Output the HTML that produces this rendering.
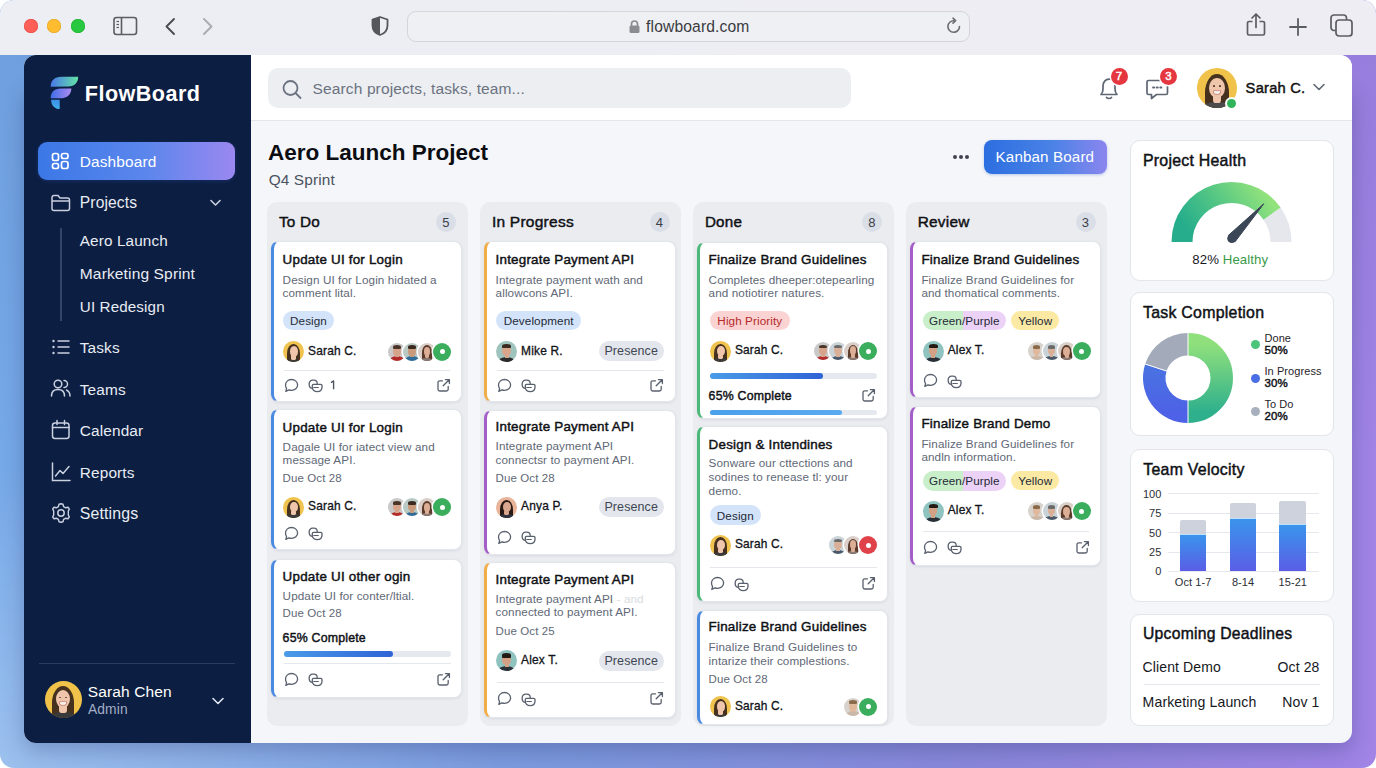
<!DOCTYPE html>
<html><head><meta charset="utf-8"><title>FlowBoard</title>
<style>
*{box-sizing:border-box;margin:0;padding:0}
html,body{width:1376px;height:768px;overflow:hidden;background:#fff;font-family:"Liberation Sans", sans-serif}
.a{position:absolute}
.t{position:absolute;line-height:1;white-space:nowrap}
.av{border-radius:50%;overflow:hidden}
.av i{filter:blur(0.3px)}
.av i{position:absolute;display:block}
</style></head><body>
<div class="a" style="left:0.0px;top:0.0px;width:1376.0px;height:768.0px;border-radius:14px;overflow:hidden;background:radial-gradient(ellipse 500px 300px at 0% 100%,rgba(255,255,255,0.28),rgba(255,255,255,0) 100%),linear-gradient(180deg,rgba(10,20,80,0.07) 0%,rgba(255,255,255,0.0) 60%),linear-gradient(90deg,#76a9e8 0%,#7c9ade 40%,#8a88da 70%,#a184e6 100%)"></div><div class="a" style="left:0.0px;top:0.0px;width:1376.0px;height:55.0px;border-radius:14px 14px 0 0;background:linear-gradient(90deg,#eceef3,#eeedf3)"></div><div class="a" style="left:23.5px;top:19.0px;width:14.0px;height:14.0px;border-radius:50%;background:#fe5f57;box-shadow:inset 0 0 0 0.5px #e2463f"></div><div class="a" style="left:47.0px;top:19.0px;width:14.0px;height:14.0px;border-radius:50%;background:#febc2e;box-shadow:inset 0 0 0 0.5px #dea123"></div><div class="a" style="left:70.5px;top:19.0px;width:14.0px;height:14.0px;border-radius:50%;background:#28c840;box-shadow:inset 0 0 0 0.5px #1aab29"></div><svg class="a" style="left:113px;top:16px;" width="25" height="20" viewBox="0 0 25 20" fill="none"><rect x="1" y="1.5" width="22.5" height="17" rx="2.5" stroke="#5b5d63" stroke-width="1.6"/><line x1="8.5" y1="2" x2="8.5" y2="18" stroke="#5b5d63" stroke-width="1.6"/><line x1="3.5" y1="5.5" x2="6" y2="5.5" stroke="#5b5d63" stroke-width="1.2"/><line x1="3.5" y1="8.5" x2="6" y2="8.5" stroke="#5b5d63" stroke-width="1.2"/><line x1="3.5" y1="11.5" x2="6" y2="11.5" stroke="#5b5d63" stroke-width="1.2"/></svg><svg class="a" style="left:163px;top:17px;" width="14" height="19" viewBox="0 0 14 19" fill="none"><path d="M11 2 L3.5 9.5 L11 17" stroke="#4a4c52" stroke-width="1.9" stroke-linecap="round" stroke-linejoin="round"/></svg><svg class="a" style="left:201px;top:17px;" width="14" height="19" viewBox="0 0 14 19" fill="none"><path d="M3 2 L10.5 9.5 L3 17" stroke="#a9abb1" stroke-width="1.9" stroke-linecap="round" stroke-linejoin="round"/></svg><svg class="a" style="left:370px;top:15px;" width="20" height="22" viewBox="0 0 20 22" fill="none"><path d="M10 2 L17.5 4.5 V10.5 C17.5 15 14.5 18.5 10 20 C5.5 18.5 2.5 15 2.5 10.5 V4.5 Z" stroke="#55575d" stroke-width="1.8" stroke-linejoin="round"/><path d="M10 2 L2.5 4.5 V10.5 C2.5 15 5.5 18.5 10 20 Z" fill="#55575d"/></svg><div class="a" style="left:406.5px;top:10.5px;width:563.0px;height:31.0px;border-radius:9px;border:1px solid #d3d5db;background:#eef0f4"></div><svg class="a" style="left:628px;top:19px;" width="13" height="15" viewBox="0 0 13 15" fill="none"><path d="M3.5 7 V5 a3 3 0 0 1 6 0 V7" stroke="#8a8c92" stroke-width="1.7"/><rect x="1.5" y="6.5" width="10" height="7.5" rx="1.5" fill="#8a8c92"/></svg><div class="t" style="left:646.1px;top:18.8px;font-size:15.65px;color:#3a3b40;letter-spacing:0.008em;">flowboard.com</div><svg class="a" style="left:945px;top:17px;" width="18" height="18" viewBox="0 0 18 18" fill="none"><path d="M14.5 9.5 A5.8 5.8 0 1 1 9 3.7" stroke="#6a6c72" stroke-width="1.6" stroke-linecap="round"/><path d="M8 1.2 L10.6 3.7 L8 6.2" stroke="#6a6c72" stroke-width="1.6" stroke-linecap="round" stroke-linejoin="round"/></svg><svg class="a" style="left:1245px;top:12px;" width="22" height="25" viewBox="0 0 22 25" fill="none"><path d="M7.5 9.5 H4 a1.5 1.5 0 0 0 -1.5 1.5 V21.5 a1.5 1.5 0 0 0 1.5 1.5 H18 a1.5 1.5 0 0 0 1.5 -1.5 V11 a1.5 1.5 0 0 0 -1.5 -1.5 H14.5" stroke="#5b5d63" stroke-width="1.7"/><path d="M11 15.5 V2.5 M7 6 L11 2 L15 6" stroke="#5b5d63" stroke-width="1.7" stroke-linecap="round" stroke-linejoin="round"/></svg><svg class="a" style="left:1288px;top:17px;" width="20" height="20" viewBox="0 0 20 20" fill="none"><path d="M10 2 V18 M2 10 H18" stroke="#5b5d63" stroke-width="1.8" stroke-linecap="round"/></svg><svg class="a" style="left:1329px;top:13px;" width="26" height="25" viewBox="0 0 26 25" fill="none"><rect x="2" y="2" width="15.5" height="15.5" rx="3" stroke="#5b5d63" stroke-width="1.7"/><rect x="7" y="7" width="16" height="16" rx="3" fill="#eeedf3" stroke="#5b5d63" stroke-width="1.7"/></svg><div class="a" style="left:24.0px;top:85.0px;width:1328.0px;height:658.0px;border-radius:12px;box-shadow:0 8px 22px rgba(40,50,110,0.30)"></div><div class="a" style="left:24.0px;top:55.0px;width:1328.0px;height:688.0px;border-radius:12px;background:#f5f6f9"></div><div class="a" style="left:24.0px;top:55.0px;width:227.0px;height:688.0px;border-radius:12px 0 0 12px;background:#0c1e41"></div><div class="a" style="left:251.0px;top:55.0px;width:1101.0px;height:66.0px;border-radius:0 12px 0 0;background:#fff;border-bottom:1px solid #e3e5ea"></div><svg class="a" style="left:49px;top:75px;" width="31" height="36" viewBox="0 0 31 36" fill="none"><defs>
<linearGradient id="lg1" x1="0" y1="0" x2="1" y2="0"><stop offset="0" stop-color="#4a78ea"/><stop offset="1" stop-color="#62e3a4"/></linearGradient>
<linearGradient id="lg2" x1="0" y1="0" x2="1" y2="0"><stop offset="0" stop-color="#3f6ee6"/><stop offset="1" stop-color="#ae8cf2"/></linearGradient>
<linearGradient id="lg3" x1="0" y1="0" x2="0" y2="1"><stop offset="0" stop-color="#3c8ee8"/><stop offset="1" stop-color="#3fb0ec"/></linearGradient></defs>
<path d="M1.7 11.8 C1.7 5.5 5.5 1.8 12.5 1.8 H29.2 C29.2 7.5 25.5 11.6 19.5 11.6 L1.7 11.8 Z" fill="url(#lg1)"/>
<path d="M1.7 23.3 C1.7 17.5 5.2 13.6 11.5 13.6 H22.4 C22.2 19 18.8 23.2 12.5 23.2 L1.7 23.3 Z" fill="url(#lg2)"/>
<path d="M2.1 24.7 H10.7 V34 C5.6 34 2.1 30.3 2.1 24.7 Z" fill="url(#lg3)"/></svg><div class="t" style="left:84.8px;top:83.0px;font-size:21.6px;color:#ffffff;font-weight:700;letter-spacing:0.45px">FlowBoard</div><div class="a" style="left:38.3px;top:142.4px;width:197.0px;height:37.2px;border-radius:9px;background:linear-gradient(90deg,#3b78e6 0%,#5b86ec 55%,#9a88f0 100%);box-shadow:0 1px 4px rgba(60,100,230,0.25)"></div><svg class="a" style="left:51px;top:152px;" width="20" height="19" viewBox="0 0 20 19" fill="none"><rect x="1.5" y="1.5" width="6" height="7" rx="2" stroke="#fff" stroke-width="1.7"/><rect x="10.5" y="1.5" width="6.5" height="5" rx="2" stroke="#fff" stroke-width="1.7"/><rect x="1.5" y="11.5" width="6" height="5" rx="2" stroke="#fff" stroke-width="1.7"/><rect x="10.5" y="9.5" width="6.5" height="7" rx="2" stroke="#fff" stroke-width="1.7"/></svg><div class="t" style="left:79.8px;top:153.9px;font-size:15.45px;color:#ffffff;letter-spacing:0.008em;">Dashboard</div><svg class="a" style="left:50px;top:193px;" width="22" height="20" viewBox="0 0 22 20" fill="none"><path d="M2 4.5 a2 2 0 0 1 2 -2 H8 L10 5 H17.5 a2 2 0 0 1 2 2 V15.5 a2 2 0 0 1 -2 2 H4 a2 2 0 0 1 -2 -2 Z M2 8 H19.5" stroke="#c9d0e0" stroke-width="1.5" stroke-linejoin="round"/></svg><div class="t" style="left:79.8px;top:195.4px;font-size:15.6px;color:#e8ecf4;letter-spacing:0.008em;">Projects</div><svg class="a" style="left:208px;top:197px;" width="15" height="12" viewBox="0 0 15 12" fill="none"><path d="M3 3.5 L7.5 8 L12 3.5" stroke="#c9d0e0" stroke-width="1.6" stroke-linecap="round" stroke-linejoin="round"/></svg><div class="a" style="left:60.0px;top:228.0px;width:1.5px;height:92.5px;background:#34446a"></div><div class="t" style="left:79.8px;top:233.0px;font-size:15.3px;color:#e8ecf4;letter-spacing:0.008em;">Aero Launch</div><div class="t" style="left:79.8px;top:266.2px;font-size:15.55px;color:#e8ecf4;letter-spacing:0.008em;">Marketing Sprint</div><div class="t" style="left:79.8px;top:299.3px;font-size:15.2px;color:#e8ecf4;letter-spacing:0.008em;">UI Redesign</div><svg class="a" style="left:50px;top:337px;" width="22" height="20" viewBox="0 0 22 20" fill="none"><circle cx="3.5" cy="4" r="1.2" fill="#c9d0e0"/><circle cx="3.5" cy="10" r="1.2" fill="#c9d0e0"/><circle cx="3.5" cy="16" r="1.2" fill="#c9d0e0"/><path d="M8 4 H19 M8 10 H19 M8 16 H19" stroke="#c9d0e0" stroke-width="1.5" stroke-linecap="round"/></svg><div class="t" style="left:79.8px;top:340.0px;font-size:15.4px;color:#e8ecf4;letter-spacing:0.008em;">Tasks</div><svg class="a" style="left:50px;top:378px;" width="22" height="20" viewBox="0 0 22 20" fill="none"><circle cx="8" cy="6" r="3.8" stroke="#c9d0e0" stroke-width="1.5"/><path d="M1.5 18 C1.5 13.5 4.5 11.5 8 11.5 C11.5 11.5 14.5 13.5 14.5 18" stroke="#c9d0e0" stroke-width="1.5" stroke-linecap="round"/><path d="M14 2.5 a3.5 3.5 0 0 1 0 7 M16.5 12 C18.5 13 20 15 20 18" stroke="#c9d0e0" stroke-width="1.5" stroke-linecap="round"/></svg><div class="t" style="left:79.8px;top:381.5px;font-size:15.4px;color:#e8ecf4;letter-spacing:0.008em;">Teams</div><svg class="a" style="left:50px;top:419px;" width="22" height="22" viewBox="0 0 22 22" fill="none"><rect x="2.5" y="4" width="16.5" height="15.5" rx="2.5" stroke="#c9d0e0" stroke-width="1.5"/><path d="M2.5 8.5 H19 M7 1.5 V5.5 M14.5 1.5 V5.5" stroke="#c9d0e0" stroke-width="1.5" stroke-linecap="round"/></svg><div class="t" style="left:79.8px;top:423.0px;font-size:15.4px;color:#e8ecf4;letter-spacing:0.008em;">Calendar</div><svg class="a" style="left:50px;top:461px;" width="22" height="22" viewBox="0 0 22 22" fill="none"><path d="M2.5 2 V19.5 H20" stroke="#c9d0e0" stroke-width="1.5" stroke-linecap="round"/><path d="M5.5 15 L10 9.5 L13 12.5 L19 5.5" stroke="#c9d0e0" stroke-width="1.5" stroke-linecap="round" stroke-linejoin="round"/></svg><div class="t" style="left:79.8px;top:464.6px;font-size:15.4px;color:#e8ecf4;letter-spacing:0.008em;">Reports</div><svg class="a" style="left:50px;top:502px;" width="22" height="22" viewBox="0 0 22 22" fill="none"><path d="M11 1.8 L13 2.3 L13.6 4.6 L15.7 5.8 L18 5.2 L19.3 6.9 L18.3 9.1 L18.3 12.9 L19.3 15.1 L18 16.8 L15.7 16.2 L13.6 17.4 L13 19.7 L11 20.2 L9 19.7 L8.4 17.4 L6.3 16.2 L4 16.8 L2.7 15.1 L3.7 12.9 L3.7 9.1 L2.7 6.9 L4 5.2 L6.3 5.8 L8.4 4.6 L9 2.3 Z" stroke="#c9d0e0" stroke-width="1.4" stroke-linejoin="round"/><circle cx="11" cy="11" r="3.2" stroke="#c9d0e0" stroke-width="1.5"/></svg><div class="t" style="left:79.8px;top:505.5px;font-size:15.9px;color:#e8ecf4;letter-spacing:0.008em;">Settings</div><div class="a" style="left:39.0px;top:663.0px;width:196.0px;height:1.0px;background:#2c3b5e"></div><div class="a av" style="left:44.5px;top:681.0px;width:37.0px;height:37.0px;background:#f0c24a;"><i style="left:7.4px;top:5.2px;width:22.2px;height:34.0px;background:#46311f;border-radius:50% 50% 22% 22%"></i><i style="left:3.0px;top:31.1px;width:31.1px;height:14.8px;background:#3a3a3a;border-radius:50% 50% 0 0"></i><i style="left:14.4px;top:22.9px;width:8.1px;height:9.6px;background:#efc6ab;border-radius:30%"></i><i style="left:11.5px;top:8.9px;width:14.1px;height:18.5px;background:#efc6ab;border-radius:50%"></i><i style="left:14.4px;top:15.9px;width:2.6px;height:1.5px;background:#5a3a2c;border-radius:50%"></i><i style="left:20.0px;top:15.9px;width:2.6px;height:1.5px;background:#5a3a2c;border-radius:50%"></i><i style="left:15.5px;top:21.1px;width:5.9px;height:2.6px;background:#f4eeea;border-radius:0 0 50% 50%;box-shadow:0 0 0 0.6px #b86a5c"></i></div><div class="t" style="left:87.8px;top:683.7px;font-size:15.5px;color:#ffffff;letter-spacing:0.008em;">Sarah Chen</div><div class="t" style="left:88.0px;top:702.8px;font-size:13.8px;color:#a3aec6;letter-spacing:0.008em;">Admin</div><svg class="a" style="left:210px;top:695px;" width="16" height="12" viewBox="0 0 16 12" fill="none"><path d="M3 3.5 L8 8.5 L13 3.5" stroke="#e0e5ef" stroke-width="1.6" stroke-linecap="round" stroke-linejoin="round"/></svg><div class="a" style="left:268.0px;top:68.0px;width:583.0px;height:40.0px;border-radius:10px;background:#eceef2"></div><svg class="a" style="left:281px;top:79px;" width="22" height="21" viewBox="0 0 22 21" fill="none"><circle cx="9.5" cy="9" r="7" stroke="#6b7280" stroke-width="1.8"/><path d="M14.5 14 L19.5 19" stroke="#6b7280" stroke-width="1.8" stroke-linecap="round"/></svg><div class="t" style="left:312.6px;top:81.1px;font-size:15.5px;color:#6b7280;letter-spacing:0.008em;">Search projects, tasks, team...</div><svg class="a" style="left:1097px;top:75px;" width="24" height="27" viewBox="0 0 24 27" fill="none"><path d="M4 19.5 C5.5 18 6 16.5 6 14 V11 C6 7 8.5 4.2 12 4.2 C15.5 4.2 18 7 18 11 V14 C18 16.5 18.5 18 20 19.5 Z" stroke="#5f6673" stroke-width="1.7" stroke-linejoin="round"/><path d="M9.5 22.5 C10.5 23.8 13.5 23.8 14.5 22.5" stroke="#5f6673" stroke-width="1.7" stroke-linecap="round"/></svg><div class="a" style="left:1110.5px;top:67.5px;width:17.0px;height:17.0px;border-radius:50%;background:#e5373f;box-shadow:0 0 0 1.5px #fff"></div><div class="t" style="left:919.0px;width:400px;text-align:center;top:70.9px;font-size:11.5px;color:#fff;-webkit-text-stroke:0.45px #fff;letter-spacing:0.016em;">7</div><svg class="a" style="left:1145px;top:76px;" width="26" height="26" viewBox="0 0 26 26" fill="none"><path d="M3.5 4.5 H21 a1.5 1.5 0 0 1 1.5 1.5 V17 a1.5 1.5 0 0 1 -1.5 1.5 H11.5 L6.5 22.5 V18.5 H3.5 a1.5 1.5 0 0 1 -1.5 -1.5 V6 a1.5 1.5 0 0 1 1.5 -1.5 Z" stroke="#5f6673" stroke-width="1.7" stroke-linejoin="round"/><path d="M8 11.5 H9.2 M11.6 11.5 H12.8 M15.2 11.5 H16.4" stroke="#5f6673" stroke-width="1.8" stroke-linecap="round"/></svg><div class="a" style="left:1160.0px;top:67.5px;width:17.0px;height:17.0px;border-radius:50%;background:#e5373f;box-shadow:0 0 0 1.5px #fff"></div><div class="t" style="left:968.5px;width:400px;text-align:center;top:70.9px;font-size:11.5px;color:#fff;-webkit-text-stroke:0.45px #fff;letter-spacing:0.016em;">3</div><div class="a av" style="left:1197.0px;top:68.0px;width:40.0px;height:40.0px;background:#f0c24a;"><i style="left:8.0px;top:5.6px;width:24.0px;height:36.8px;background:#46311f;border-radius:50% 50% 22% 22%"></i><i style="left:3.2px;top:33.6px;width:33.6px;height:16.0px;background:#4b4b4b;border-radius:50% 50% 0 0"></i><i style="left:15.6px;top:24.8px;width:8.8px;height:10.4px;background:#efc6ab;border-radius:30%"></i><i style="left:12.4px;top:9.6px;width:15.2px;height:20.0px;background:#efc6ab;border-radius:50%"></i><i style="left:15.6px;top:17.2px;width:2.8px;height:1.6px;background:#5a3a2c;border-radius:50%"></i><i style="left:21.6px;top:17.2px;width:2.8px;height:1.6px;background:#5a3a2c;border-radius:50%"></i><i style="left:16.8px;top:22.8px;width:6.4px;height:2.8px;background:#f4eeea;border-radius:0 0 50% 50%;box-shadow:0 0 0 0.6px #b86a5c"></i></div><div class="a" style="left:1226.8px;top:98.6px;width:9.5px;height:9.5px;border-radius:50%;background:#2fb45a;box-shadow:0 0 0 2px #fff"></div><div class="t" style="left:1245.6px;top:81.3px;font-size:14.7px;color:#111;-webkit-text-stroke:0.45px #111;letter-spacing:0.016em;">Sarah C.</div><svg class="a" style="left:1311px;top:81px;" width="16" height="12" viewBox="0 0 16 12" fill="none"><path d="M3 3.5 L8 8.5 L13 3.5" stroke="#5f6673" stroke-width="1.6" stroke-linecap="round" stroke-linejoin="round"/></svg><div class="t" style="left:267.9px;top:142.2px;font-size:22.5px;color:#0b0d12;font-weight:700;">Aero Launch Project</div><div class="t" style="left:268.7px;top:171.8px;font-size:15.4px;color:#4b5260;letter-spacing:0.008em;">Q4 Sprint</div><div class="a" style="left:953.0px;top:154.5px;width:4.0px;height:4.0px;border-radius:50%;background:#3f4450"></div><div class="a" style="left:959.0px;top:154.5px;width:4.0px;height:4.0px;border-radius:50%;background:#3f4450"></div><div class="a" style="left:965.0px;top:154.5px;width:4.0px;height:4.0px;border-radius:50%;background:#3f4450"></div><div class="a" style="left:984.0px;top:140.0px;width:123.0px;height:34.0px;border-radius:8px;background:linear-gradient(90deg,#2c6ee0 0%,#4a82e6 55%,#8a86ee 100%);box-shadow:0 1px 3px rgba(40,90,200,0.3)"></div><div class="t" style="left:995.6px;top:149.4px;font-size:15.2px;color:#ffffff;letter-spacing:0.008em;">Kanban Board</div><div class="a" style="left:267.0px;top:202.0px;width:200.5px;height:523.5px;border-radius:10px;background:#ebecf0"></div><div class="t" style="left:278.9px;top:214.0px;font-size:15.3px;color:#0f1115;-webkit-text-stroke:0.45px #0f1115;letter-spacing:0.016em;">To Do</div><div class="a" style="left:436.0px;top:212.0px;width:20.0px;height:20.0px;border-radius:50%;background:#dadee6"></div><div class="t" style="left:246.0px;width:400px;text-align:center;top:215.6px;font-size:13px;color:#3a3f4a;letter-spacing:0.008em;">5</div><div class="a" style="left:480.0px;top:202.0px;width:201.0px;height:523.5px;border-radius:10px;background:#ebecf0"></div><div class="t" style="left:491.9px;top:213.9px;font-size:15.5px;color:#0f1115;-webkit-text-stroke:0.45px #0f1115;letter-spacing:0.016em;">In Progress</div><div class="a" style="left:649.5px;top:212.0px;width:20.0px;height:20.0px;border-radius:50%;background:#dadee6"></div><div class="t" style="left:459.5px;width:400px;text-align:center;top:215.6px;font-size:13px;color:#3a3f4a;letter-spacing:0.008em;">4</div><div class="a" style="left:693.0px;top:202.0px;width:200.5px;height:523.5px;border-radius:10px;background:#ebecf0"></div><div class="t" style="left:704.9px;top:214.1px;font-size:15.2px;color:#0f1115;-webkit-text-stroke:0.45px #0f1115;letter-spacing:0.016em;">Done</div><div class="a" style="left:862.0px;top:212.0px;width:20.0px;height:20.0px;border-radius:50%;background:#dadee6"></div><div class="t" style="left:672.0px;width:400px;text-align:center;top:215.6px;font-size:13px;color:#3a3f4a;letter-spacing:0.008em;">8</div><div class="a" style="left:905.8px;top:202.0px;width:201.2px;height:523.5px;border-radius:10px;background:#ebecf0"></div><div class="t" style="left:917.7px;top:214.0px;font-size:15.4px;color:#0f1115;-webkit-text-stroke:0.45px #0f1115;letter-spacing:0.016em;">Review</div><div class="a" style="left:1075.5px;top:212.0px;width:20.0px;height:20.0px;border-radius:50%;background:#dadee6"></div><div class="t" style="left:885.5px;width:400px;text-align:center;top:215.6px;font-size:13px;color:#3a3f4a;letter-spacing:0.008em;">3</div><div class="a" style="left:271.0px;top:241.3px;width:191.0px;height:161.0px;border-radius:8px;background:#fff;border:1px solid #e2e5ea;border-left:3.5px solid #4a8ae0;box-shadow:0 1px 3px rgba(20,30,60,0.08)"></div><div class="t" style="left:282.6px;top:253.4px;font-size:13.4px;color:#0f1115;-webkit-text-stroke:0.45px #0f1115;letter-spacing:0.016em;">Update UI for Login</div><div class="t" style="left:282.6px;top:273.5px;font-size:11.7px;color:#616876;letter-spacing:0.008em;">Design UI for Login hidated a</div><div class="t" style="left:282.6px;top:286.8px;font-size:11.7px;color:#616876;letter-spacing:0.008em;">comment lital.</div><div class="a" style="left:283.2px;top:310.6px;width:50.6px;height:19.5px;border-radius:10px;background:#d3e4fa"></div><div class="t" style="left:108.5px;width:400px;text-align:center;top:315.0px;font-size:11.7px;color:#1f2937;letter-spacing:0.008em;">Design</div><div class="a av" style="left:283.2px;top:341.0px;width:21.0px;height:21.0px;background:#f0c24e;"><i style="left:4.2px;top:2.9px;width:12.6px;height:19.3px;background:#46311f;border-radius:50% 50% 22% 22%"></i><i style="left:1.7px;top:17.6px;width:17.6px;height:8.4px;background:#3b3b3b;border-radius:50% 50% 0 0"></i><i style="left:8.2px;top:13.0px;width:4.6px;height:5.5px;background:#efc6ab;border-radius:30%"></i><i style="left:6.5px;top:5.0px;width:8.0px;height:10.5px;background:#efc6ab;border-radius:50%"></i></div><div class="t" style="left:308.1px;top:345.5px;font-size:11.9px;color:#111318;-webkit-text-stroke:0.45px #111318;letter-spacing:0.016em;-webkit-text-stroke-width:0.3px">Sarah C.</div><div class="a av" style="left:388.0px;top:342.5px;width:18.0px;height:18.0px;background:#c9c9c9;box-shadow:0 0 0 1.5px #fff;"><i style="left:1.8px;top:13.7px;width:14.4px;height:9.0px;background:#b52b2b;border-radius:50% 50% 0 0"></i><i style="left:7.2px;top:11.2px;width:3.6px;height:3.6px;background:#d6a48a"></i><i style="left:5.4px;top:4.0px;width:7.2px;height:9.0px;background:#d6a48a;border-radius:50%"></i><i style="left:5.2px;top:2.7px;width:7.6px;height:3.6px;background:#4a3428;border-radius:50% 50% 20% 20%"></i></div><div class="a av" style="left:403.0px;top:342.5px;width:18.0px;height:18.0px;background:#b9c9c4;box-shadow:0 0 0 1.5px #fff;"><i style="left:1.8px;top:13.7px;width:14.4px;height:9.0px;background:#2f6c9a;border-radius:50% 50% 0 0"></i><i style="left:7.2px;top:11.2px;width:3.6px;height:3.6px;background:#c99a7c"></i><i style="left:5.4px;top:4.0px;width:7.2px;height:9.0px;background:#c99a7c;border-radius:50%"></i><i style="left:5.2px;top:2.7px;width:7.6px;height:3.6px;background:#3a2a20;border-radius:50% 50% 20% 20%"></i></div><div class="a av" style="left:418.0px;top:342.5px;width:18.0px;height:18.0px;background:#d9cfc8;box-shadow:0 0 0 1.5px #fff;"><i style="left:3.6px;top:2.5px;width:10.8px;height:16.6px;background:#5a3a2a;border-radius:50% 50% 22% 22%"></i><i style="left:1.4px;top:15.1px;width:15.1px;height:7.2px;background:#8a7a74;border-radius:50% 50% 0 0"></i><i style="left:7.0px;top:11.2px;width:4.0px;height:4.7px;background:#dcae95;border-radius:30%"></i><i style="left:5.6px;top:4.3px;width:6.8px;height:9.0px;background:#dcae95;border-radius:50%"></i></div><div class="a av" style="left:433.0px;top:342.5px;width:18.0px;height:18.0px;background:#3aae5c;box-shadow:0 0 0 1.5px #fff;"><i style="left:6.5px;top:6.5px;width:5px;height:5px;background:#fff;border-radius:50%"></i></div><div class="a" style="left:284.0px;top:370.4px;width:166.0px;height:1.0px;background:#e4e7ec"></div><svg class="a" style="left:283.7px;top:377.8px;" width="15" height="15" viewBox="0 0 15 15" fill="none"><path d="M7.5 1.5 C11 1.5 13.6 4 13.6 7 C13.6 10 11 12.4 7.5 12.4 C6.6 12.4 5.7 12.2 4.9 11.9 L1.8 13.4 L2.6 10.6 C1.9 9.6 1.5 8.4 1.5 7 C1.5 4 4 1.5 7.5 1.5 Z" stroke="#59606d" stroke-width="1.3" stroke-linejoin="round"/></svg><svg class="a" style="left:308px;top:379px;" width="16" height="15" viewBox="0 0 16 15" fill="none"><rect x="1.2" y="1.2" width="8" height="8.2" rx="3.3" stroke="#59606d" stroke-width="1.3"/><path d="M5.5 5.3 H12.7 C13.5 5.3 14 5.8 14 6.6 V8.3 C14 10.8 12 12.6 9.2 12.6 C6.4 12.6 4.3 10.8 4.3 8.3 V6.6 C4.3 5.8 4.8 5.3 5.5 5.3 Z" fill="#fff" stroke="#59606d" stroke-width="1.3"/><path d="M5.8 8.5 H10.3" stroke="#59606d" stroke-width="1.2" stroke-linecap="round"/></svg><svg class="a" style="left:330.3px;top:380.1px;" width="6" height="11" viewBox="0 0 6 11" fill="none"><path d="M1 2.6 L3.6 0.9 V9.2" stroke="#4b5260" stroke-width="1.35" stroke-linejoin="round"/></svg><svg class="a" style="left:435.8px;top:377.7px;" width="15" height="15" viewBox="0 0 15 15" fill="none"><path d="M6.5 2.8 H3.8 a1.8 1.8 0 0 0 -1.8 1.8 V11.2 a1.8 1.8 0 0 0 1.8 1.8 H10.4 a1.8 1.8 0 0 0 1.8 -1.8 V8.5" stroke="#59606d" stroke-width="1.3" stroke-linecap="round"/><path d="M7.2 7.8 L13.2 1.8 M9.4 1.6 H13.4 V5.6" stroke="#59606d" stroke-width="1.3" stroke-linecap="round" stroke-linejoin="round"/></svg><div class="a" style="left:271.0px;top:409.4px;width:191.0px;height:141.0px;border-radius:8px;background:#fff;border:1px solid #e2e5ea;border-left:3.5px solid #4a8ae0;box-shadow:0 1px 3px rgba(20,30,60,0.08)"></div><div class="t" style="left:282.6px;top:420.7px;font-size:13.4px;color:#0f1115;-webkit-text-stroke:0.45px #0f1115;letter-spacing:0.016em;">Update UI for Login</div><div class="t" style="left:282.6px;top:440.5px;font-size:11.7px;color:#616876;letter-spacing:0.008em;">Dagale UI for iatect view and</div><div class="t" style="left:282.6px;top:453.6px;font-size:11.7px;color:#616876;letter-spacing:0.008em;">message API.</div><div class="t" style="left:282.6px;top:472.6px;font-size:11.5px;color:#616876;letter-spacing:0.008em;">Due Oct 28</div><div class="a av" style="left:283.2px;top:496.8px;width:21.0px;height:21.0px;background:#f0c24e;"><i style="left:4.2px;top:2.9px;width:12.6px;height:19.3px;background:#46311f;border-radius:50% 50% 22% 22%"></i><i style="left:1.7px;top:17.6px;width:17.6px;height:8.4px;background:#3b3b3b;border-radius:50% 50% 0 0"></i><i style="left:8.2px;top:13.0px;width:4.6px;height:5.5px;background:#efc6ab;border-radius:30%"></i><i style="left:6.5px;top:5.0px;width:8.0px;height:10.5px;background:#efc6ab;border-radius:50%"></i></div><div class="t" style="left:308.1px;top:501.3px;font-size:11.9px;color:#111318;-webkit-text-stroke:0.45px #111318;letter-spacing:0.016em;-webkit-text-stroke-width:0.3px">Sarah C.</div><div class="a av" style="left:388.0px;top:498.3px;width:18.0px;height:18.0px;background:#c9c9c9;box-shadow:0 0 0 1.5px #fff;"><i style="left:1.8px;top:13.7px;width:14.4px;height:9.0px;background:#b52b2b;border-radius:50% 50% 0 0"></i><i style="left:7.2px;top:11.2px;width:3.6px;height:3.6px;background:#d6a48a"></i><i style="left:5.4px;top:4.0px;width:7.2px;height:9.0px;background:#d6a48a;border-radius:50%"></i><i style="left:5.2px;top:2.7px;width:7.6px;height:3.6px;background:#4a3428;border-radius:50% 50% 20% 20%"></i></div><div class="a av" style="left:403.0px;top:498.3px;width:18.0px;height:18.0px;background:#b9c9c4;box-shadow:0 0 0 1.5px #fff;"><i style="left:1.8px;top:13.7px;width:14.4px;height:9.0px;background:#2f6c9a;border-radius:50% 50% 0 0"></i><i style="left:7.2px;top:11.2px;width:3.6px;height:3.6px;background:#c99a7c"></i><i style="left:5.4px;top:4.0px;width:7.2px;height:9.0px;background:#c99a7c;border-radius:50%"></i><i style="left:5.2px;top:2.7px;width:7.6px;height:3.6px;background:#3a2a20;border-radius:50% 50% 20% 20%"></i></div><div class="a av" style="left:418.0px;top:498.3px;width:18.0px;height:18.0px;background:#d9cfc8;box-shadow:0 0 0 1.5px #fff;"><i style="left:3.6px;top:2.5px;width:10.8px;height:16.6px;background:#5a3a2a;border-radius:50% 50% 22% 22%"></i><i style="left:1.4px;top:15.1px;width:15.1px;height:7.2px;background:#8a7a74;border-radius:50% 50% 0 0"></i><i style="left:7.0px;top:11.2px;width:4.0px;height:4.7px;background:#dcae95;border-radius:30%"></i><i style="left:5.6px;top:4.3px;width:6.8px;height:9.0px;background:#dcae95;border-radius:50%"></i></div><div class="a av" style="left:433.0px;top:498.3px;width:18.0px;height:18.0px;background:#3aae5c;box-shadow:0 0 0 1.5px #fff;"><i style="left:6.5px;top:6.5px;width:5px;height:5px;background:#fff;border-radius:50%"></i></div><svg class="a" style="left:283.7px;top:526.1999999999999px;" width="15" height="15" viewBox="0 0 15 15" fill="none"><path d="M7.5 1.5 C11 1.5 13.6 4 13.6 7 C13.6 10 11 12.4 7.5 12.4 C6.6 12.4 5.7 12.2 4.9 11.9 L1.8 13.4 L2.6 10.6 C1.9 9.6 1.5 8.4 1.5 7 C1.5 4 4 1.5 7.5 1.5 Z" stroke="#59606d" stroke-width="1.3" stroke-linejoin="round"/></svg><svg class="a" style="left:308px;top:527.4px;" width="16" height="15" viewBox="0 0 16 15" fill="none"><rect x="1.2" y="1.2" width="8" height="8.2" rx="3.3" stroke="#59606d" stroke-width="1.3"/><path d="M5.5 5.3 H12.7 C13.5 5.3 14 5.8 14 6.6 V8.3 C14 10.8 12 12.6 9.2 12.6 C6.4 12.6 4.3 10.8 4.3 8.3 V6.6 C4.3 5.8 4.8 5.3 5.5 5.3 Z" fill="#fff" stroke="#59606d" stroke-width="1.3"/><path d="M5.8 8.5 H10.3" stroke="#59606d" stroke-width="1.2" stroke-linecap="round"/></svg><div class="a" style="left:271.0px;top:558.9px;width:191.0px;height:139.1px;border-radius:8px;background:#fff;border:1px solid #e2e5ea;border-left:3.5px solid #4a8ae0;box-shadow:0 1px 3px rgba(20,30,60,0.08)"></div><div class="t" style="left:282.6px;top:569.9px;font-size:13.4px;color:#0f1115;-webkit-text-stroke:0.45px #0f1115;letter-spacing:0.016em;">Update UI other ogin</div><div class="t" style="left:282.6px;top:589.8px;font-size:11.7px;color:#616876;letter-spacing:0.008em;">Update UI for conter/ltial.</div><div class="t" style="left:282.6px;top:607.8px;font-size:11.5px;color:#616876;letter-spacing:0.008em;">Due Oct 28</div><div class="t" style="left:282.6px;top:632.0px;font-size:12.35px;color:#111318;-webkit-text-stroke:0.45px #111318;letter-spacing:0.016em;">65% Complete</div><div class="a" style="left:284.0px;top:651.2px;width:167.0px;height:5.5px;border-radius:3px;background:#e5e8ee"></div><div class="a" style="left:284.0px;top:651.2px;width:108.5px;height:5.5px;border-radius:3px;background:linear-gradient(90deg,#4a9be8,#2f63d6)"></div><div class="a" style="left:284.0px;top:663.2px;width:167.0px;height:1.0px;background:#e4e7ec"></div><svg class="a" style="left:283.7px;top:671.8px;" width="15" height="15" viewBox="0 0 15 15" fill="none"><path d="M7.5 1.5 C11 1.5 13.6 4 13.6 7 C13.6 10 11 12.4 7.5 12.4 C6.6 12.4 5.7 12.2 4.9 11.9 L1.8 13.4 L2.6 10.6 C1.9 9.6 1.5 8.4 1.5 7 C1.5 4 4 1.5 7.5 1.5 Z" stroke="#59606d" stroke-width="1.3" stroke-linejoin="round"/></svg><svg class="a" style="left:308px;top:673px;" width="16" height="15" viewBox="0 0 16 15" fill="none"><rect x="1.2" y="1.2" width="8" height="8.2" rx="3.3" stroke="#59606d" stroke-width="1.3"/><path d="M5.5 5.3 H12.7 C13.5 5.3 14 5.8 14 6.6 V8.3 C14 10.8 12 12.6 9.2 12.6 C6.4 12.6 4.3 10.8 4.3 8.3 V6.6 C4.3 5.8 4.8 5.3 5.5 5.3 Z" fill="#fff" stroke="#59606d" stroke-width="1.3"/><path d="M5.8 8.5 H10.3" stroke="#59606d" stroke-width="1.2" stroke-linecap="round"/></svg><svg class="a" style="left:435.8px;top:671.7px;" width="15" height="15" viewBox="0 0 15 15" fill="none"><path d="M6.5 2.8 H3.8 a1.8 1.8 0 0 0 -1.8 1.8 V11.2 a1.8 1.8 0 0 0 1.8 1.8 H10.4 a1.8 1.8 0 0 0 1.8 -1.8 V8.5" stroke="#59606d" stroke-width="1.3" stroke-linecap="round"/><path d="M7.2 7.8 L13.2 1.8 M9.4 1.6 H13.4 V5.6" stroke="#59606d" stroke-width="1.3" stroke-linecap="round" stroke-linejoin="round"/></svg><div class="a" style="left:484.0px;top:241.3px;width:191.5px;height:161.0px;border-radius:8px;background:#fff;border:1px solid #e2e5ea;border-left:3.5px solid #f0ad48;box-shadow:0 1px 3px rgba(20,30,60,0.08)"></div><div class="t" style="left:495.6px;top:253.4px;font-size:13.4px;color:#0f1115;-webkit-text-stroke:0.45px #0f1115;letter-spacing:0.016em;">Integrate Payment API</div><div class="t" style="left:495.6px;top:273.5px;font-size:11.7px;color:#616876;letter-spacing:0.008em;">Integrate payment wath and</div><div class="t" style="left:495.6px;top:286.8px;font-size:11.7px;color:#616876;letter-spacing:0.008em;">allowcons API.</div><div class="a" style="left:496.2px;top:310.6px;width:85.0px;height:19.5px;border-radius:10px;background:#d3e4fa"></div><div class="t" style="left:338.7px;width:400px;text-align:center;top:315.0px;font-size:11.7px;color:#1f2937;letter-spacing:0.008em;">Development</div><div class="a av" style="left:496.2px;top:341.0px;width:21.0px;height:21.0px;background:#9fc3bd;"><i style="left:2.1px;top:16.0px;width:16.8px;height:10.5px;background:#2b2b2b;border-radius:50% 50% 0 0"></i><i style="left:8.4px;top:13.0px;width:4.2px;height:4.2px;background:#d9a68c"></i><i style="left:6.3px;top:4.6px;width:8.4px;height:10.5px;background:#d9a68c;border-radius:50%"></i><i style="left:6.1px;top:3.1px;width:8.8px;height:4.2px;background:#3a2a20;border-radius:50% 50% 20% 20%"></i></div><div class="t" style="left:521.1px;top:345.5px;font-size:11.9px;color:#111318;-webkit-text-stroke:0.45px #111318;letter-spacing:0.016em;-webkit-text-stroke-width:0.3px">Mike R.</div><div class="a" style="left:598.5px;top:341.4px;width:65.5px;height:20.0px;border-radius:10px;background:#e3e6ec"></div><div class="t" style="left:431.2px;width:400px;text-align:center;top:345.1px;font-size:12.5px;color:#3f4654;letter-spacing:0.008em;">Presence</div><div class="a" style="left:497.0px;top:370.4px;width:166.5px;height:1.0px;background:#e4e7ec"></div><svg class="a" style="left:496.7px;top:377.8px;" width="15" height="15" viewBox="0 0 15 15" fill="none"><path d="M7.5 1.5 C11 1.5 13.6 4 13.6 7 C13.6 10 11 12.4 7.5 12.4 C6.6 12.4 5.7 12.2 4.9 11.9 L1.8 13.4 L2.6 10.6 C1.9 9.6 1.5 8.4 1.5 7 C1.5 4 4 1.5 7.5 1.5 Z" stroke="#59606d" stroke-width="1.3" stroke-linejoin="round"/></svg><svg class="a" style="left:521px;top:379px;" width="16" height="15" viewBox="0 0 16 15" fill="none"><rect x="1.2" y="1.2" width="8" height="8.2" rx="3.3" stroke="#59606d" stroke-width="1.3"/><path d="M5.5 5.3 H12.7 C13.5 5.3 14 5.8 14 6.6 V8.3 C14 10.8 12 12.6 9.2 12.6 C6.4 12.6 4.3 10.8 4.3 8.3 V6.6 C4.3 5.8 4.8 5.3 5.5 5.3 Z" fill="#fff" stroke="#59606d" stroke-width="1.3"/><path d="M5.8 8.5 H10.3" stroke="#59606d" stroke-width="1.2" stroke-linecap="round"/></svg><svg class="a" style="left:649.3px;top:377.7px;" width="15" height="15" viewBox="0 0 15 15" fill="none"><path d="M6.5 2.8 H3.8 a1.8 1.8 0 0 0 -1.8 1.8 V11.2 a1.8 1.8 0 0 0 1.8 1.8 H10.4 a1.8 1.8 0 0 0 1.8 -1.8 V8.5" stroke="#59606d" stroke-width="1.3" stroke-linecap="round"/><path d="M7.2 7.8 L13.2 1.8 M9.4 1.6 H13.4 V5.6" stroke="#59606d" stroke-width="1.3" stroke-linecap="round" stroke-linejoin="round"/></svg><div class="a" style="left:484.0px;top:409.5px;width:191.5px;height:145.2px;border-radius:8px;background:#fff;border:1px solid #e2e5ea;border-left:3.5px solid #a45ec8;box-shadow:0 1px 3px rgba(20,30,60,0.08)"></div><div class="t" style="left:495.6px;top:420.4px;font-size:13.4px;color:#0f1115;-webkit-text-stroke:0.45px #0f1115;letter-spacing:0.016em;">Integrate Payment API</div><div class="t" style="left:495.6px;top:440.4px;font-size:11.7px;color:#616876;letter-spacing:0.008em;">Integrate payment API</div><div class="t" style="left:495.6px;top:453.7px;font-size:11.7px;color:#616876;letter-spacing:0.008em;">connectsr to payment API.</div><div class="t" style="left:495.6px;top:472.8px;font-size:11.5px;color:#616876;letter-spacing:0.008em;">Due Oct 28</div><div class="a av" style="left:496.2px;top:496.9px;width:21.0px;height:21.0px;background:#e9b49a;"><i style="left:4.2px;top:2.9px;width:12.6px;height:19.3px;background:#2a1a14;border-radius:50% 50% 22% 22%"></i><i style="left:1.7px;top:17.6px;width:17.6px;height:8.4px;background:#2e3440;border-radius:50% 50% 0 0"></i><i style="left:8.2px;top:13.0px;width:4.6px;height:5.5px;background:#dca78f;border-radius:30%"></i><i style="left:6.5px;top:5.0px;width:8.0px;height:10.5px;background:#dca78f;border-radius:50%"></i></div><div class="t" style="left:521.1px;top:501.4px;font-size:11.9px;color:#111318;-webkit-text-stroke:0.45px #111318;letter-spacing:0.016em;-webkit-text-stroke-width:0.3px">Anya P.</div><div class="a" style="left:598.5px;top:497.4px;width:65.5px;height:20.0px;border-radius:10px;background:#e3e6ec"></div><div class="t" style="left:431.2px;width:400px;text-align:center;top:501.1px;font-size:12.5px;color:#3f4654;letter-spacing:0.008em;">Presence</div><svg class="a" style="left:496.7px;top:530.1999999999999px;" width="15" height="15" viewBox="0 0 15 15" fill="none"><path d="M7.5 1.5 C11 1.5 13.6 4 13.6 7 C13.6 10 11 12.4 7.5 12.4 C6.6 12.4 5.7 12.2 4.9 11.9 L1.8 13.4 L2.6 10.6 C1.9 9.6 1.5 8.4 1.5 7 C1.5 4 4 1.5 7.5 1.5 Z" stroke="#59606d" stroke-width="1.3" stroke-linejoin="round"/></svg><svg class="a" style="left:521px;top:531.4px;" width="16" height="15" viewBox="0 0 16 15" fill="none"><rect x="1.2" y="1.2" width="8" height="8.2" rx="3.3" stroke="#59606d" stroke-width="1.3"/><path d="M5.5 5.3 H12.7 C13.5 5.3 14 5.8 14 6.6 V8.3 C14 10.8 12 12.6 9.2 12.6 C6.4 12.6 4.3 10.8 4.3 8.3 V6.6 C4.3 5.8 4.8 5.3 5.5 5.3 Z" fill="#fff" stroke="#59606d" stroke-width="1.3"/><path d="M5.8 8.5 H10.3" stroke="#59606d" stroke-width="1.2" stroke-linecap="round"/></svg><div class="a" style="left:484.0px;top:562.4px;width:191.5px;height:155.6px;border-radius:8px;background:#fff;border:1px solid #e2e5ea;border-left:3.5px solid #f0ad48;box-shadow:0 1px 3px rgba(20,30,60,0.08)"></div><div class="t" style="left:495.6px;top:573.4px;font-size:13.4px;color:#0f1115;-webkit-text-stroke:0.45px #0f1115;letter-spacing:0.016em;">Integrate Payment API</div><div class="t" style="left:495.6px;top:593.4px;font-size:11.7px;color:#616876;letter-spacing:0.008em;">Integrate payment API <span style="color:#d8dbe0">- and</span></div><div class="t" style="left:495.6px;top:606.1px;font-size:11.7px;color:#616876;letter-spacing:0.008em;">connected to payment API.</div><div class="t" style="left:495.6px;top:625.8px;font-size:11.5px;color:#616876;letter-spacing:0.008em;">Due Oct 25</div><div class="a av" style="left:496.2px;top:650.3px;width:21.0px;height:21.0px;background:#8fc3c0;"><i style="left:2.1px;top:16.0px;width:16.8px;height:10.5px;background:#2b2f36;border-radius:50% 50% 0 0"></i><i style="left:8.4px;top:13.0px;width:4.2px;height:4.2px;background:#d4a184"></i><i style="left:6.3px;top:4.6px;width:8.4px;height:10.5px;background:#d4a184;border-radius:50%"></i><i style="left:6.1px;top:3.1px;width:8.8px;height:4.2px;background:#231a14;border-radius:50% 50% 20% 20%"></i></div><div class="t" style="left:521.1px;top:654.8px;font-size:11.9px;color:#111318;-webkit-text-stroke:0.45px #111318;letter-spacing:0.016em;-webkit-text-stroke-width:0.3px">Alex T.</div><div class="a" style="left:598.5px;top:650.8px;width:65.5px;height:20.0px;border-radius:10px;background:#e3e6ec"></div><div class="t" style="left:431.2px;width:400px;text-align:center;top:654.5px;font-size:12.5px;color:#3f4654;letter-spacing:0.008em;">Presence</div><div class="a" style="left:497.0px;top:682.3px;width:166.5px;height:1.0px;background:#e4e7ec"></div><svg class="a" style="left:496.7px;top:691.3px;" width="15" height="15" viewBox="0 0 15 15" fill="none"><path d="M7.5 1.5 C11 1.5 13.6 4 13.6 7 C13.6 10 11 12.4 7.5 12.4 C6.6 12.4 5.7 12.2 4.9 11.9 L1.8 13.4 L2.6 10.6 C1.9 9.6 1.5 8.4 1.5 7 C1.5 4 4 1.5 7.5 1.5 Z" stroke="#59606d" stroke-width="1.3" stroke-linejoin="round"/></svg><svg class="a" style="left:521px;top:692.5px;" width="16" height="15" viewBox="0 0 16 15" fill="none"><rect x="1.2" y="1.2" width="8" height="8.2" rx="3.3" stroke="#59606d" stroke-width="1.3"/><path d="M5.5 5.3 H12.7 C13.5 5.3 14 5.8 14 6.6 V8.3 C14 10.8 12 12.6 9.2 12.6 C6.4 12.6 4.3 10.8 4.3 8.3 V6.6 C4.3 5.8 4.8 5.3 5.5 5.3 Z" fill="#fff" stroke="#59606d" stroke-width="1.3"/><path d="M5.8 8.5 H10.3" stroke="#59606d" stroke-width="1.2" stroke-linecap="round"/></svg><svg class="a" style="left:649.3px;top:691.2px;" width="15" height="15" viewBox="0 0 15 15" fill="none"><path d="M6.5 2.8 H3.8 a1.8 1.8 0 0 0 -1.8 1.8 V11.2 a1.8 1.8 0 0 0 1.8 1.8 H10.4 a1.8 1.8 0 0 0 1.8 -1.8 V8.5" stroke="#59606d" stroke-width="1.3" stroke-linecap="round"/><path d="M7.2 7.8 L13.2 1.8 M9.4 1.6 H13.4 V5.6" stroke="#59606d" stroke-width="1.3" stroke-linecap="round" stroke-linejoin="round"/></svg><div class="a" style="left:697.0px;top:241.6px;width:191.0px;height:177.8px;border-radius:8px;background:#fff;border:1px solid #e2e5ea;border-left:3.5px solid #4cb87a;box-shadow:0 1px 3px rgba(20,30,60,0.08)"></div><div class="t" style="left:708.6px;top:253.0px;font-size:13.4px;color:#0f1115;-webkit-text-stroke:0.45px #0f1115;letter-spacing:0.016em;">Finaiize Brand Guidelines</div><div class="t" style="left:708.6px;top:273.9px;font-size:11.7px;color:#616876;letter-spacing:0.008em;">Completes dheeper:otepearling</div><div class="t" style="left:708.6px;top:287.1px;font-size:11.7px;color:#616876;letter-spacing:0.008em;">and notiotirer natures.</div><div class="a" style="left:710.0px;top:310.6px;width:79.6px;height:19.5px;border-radius:10px;background:#fbd3d3"></div><div class="t" style="left:549.8px;width:400px;text-align:center;top:315.0px;font-size:11.7px;color:#b42a2a;letter-spacing:0.008em;">High Priority</div><div class="a av" style="left:710.0px;top:340.7px;width:21.0px;height:21.0px;background:#f0c24e;"><i style="left:4.2px;top:2.9px;width:12.6px;height:19.3px;background:#46311f;border-radius:50% 50% 22% 22%"></i><i style="left:1.7px;top:17.6px;width:17.6px;height:8.4px;background:#3b3b3b;border-radius:50% 50% 0 0"></i><i style="left:8.2px;top:13.0px;width:4.6px;height:5.5px;background:#efc6ab;border-radius:30%"></i><i style="left:6.5px;top:5.0px;width:8.0px;height:10.5px;background:#efc6ab;border-radius:50%"></i></div><div class="t" style="left:734.9px;top:345.2px;font-size:11.9px;color:#111318;-webkit-text-stroke:0.45px #111318;letter-spacing:0.016em;-webkit-text-stroke-width:0.3px">Sarah C.</div><div class="a av" style="left:814.0px;top:342.2px;width:18.0px;height:18.0px;background:#c9c9c9;box-shadow:0 0 0 1.5px #fff;"><i style="left:1.8px;top:13.7px;width:14.4px;height:9.0px;background:#b52b2b;border-radius:50% 50% 0 0"></i><i style="left:7.2px;top:11.2px;width:3.6px;height:3.6px;background:#d6a48a"></i><i style="left:5.4px;top:4.0px;width:7.2px;height:9.0px;background:#d6a48a;border-radius:50%"></i><i style="left:5.2px;top:2.7px;width:7.6px;height:3.6px;background:#4a3428;border-radius:50% 50% 20% 20%"></i></div><div class="a av" style="left:829.0px;top:342.2px;width:18.0px;height:18.0px;background:#c9d3d8;box-shadow:0 0 0 1.5px #fff;"><i style="left:1.8px;top:13.7px;width:14.4px;height:9.0px;background:#4a5a6a;border-radius:50% 50% 0 0"></i><i style="left:7.2px;top:11.2px;width:3.6px;height:3.6px;background:#d9b097"></i><i style="left:5.4px;top:4.0px;width:7.2px;height:9.0px;background:#d9b097;border-radius:50%"></i><i style="left:5.2px;top:2.7px;width:7.6px;height:3.6px;background:#6a6a6a;border-radius:50% 50% 20% 20%"></i></div><div class="a av" style="left:844.0px;top:342.2px;width:18.0px;height:18.0px;background:#d9cfc8;box-shadow:0 0 0 1.5px #fff;"><i style="left:3.6px;top:2.5px;width:10.8px;height:16.6px;background:#5a3a2a;border-radius:50% 50% 22% 22%"></i><i style="left:1.4px;top:15.1px;width:15.1px;height:7.2px;background:#8a7a74;border-radius:50% 50% 0 0"></i><i style="left:7.0px;top:11.2px;width:4.0px;height:4.7px;background:#dcae95;border-radius:30%"></i><i style="left:5.6px;top:4.3px;width:6.8px;height:9.0px;background:#dcae95;border-radius:50%"></i></div><div class="a av" style="left:859.0px;top:342.2px;width:18.0px;height:18.0px;background:#3aae5c;box-shadow:0 0 0 1.5px #fff;"><i style="left:6.5px;top:6.5px;width:5px;height:5px;background:#fff;border-radius:50%"></i></div><div class="a" style="left:710.0px;top:373.0px;width:166.5px;height:5.5px;border-radius:3px;background:#e5e8ee"></div><div class="a" style="left:710.0px;top:373.0px;width:113.2px;height:5.5px;border-radius:3px;background:linear-gradient(90deg,#4a9be8,#2f63d6)"></div><div class="t" style="left:708.6px;top:390.1px;font-size:12.35px;color:#111318;-webkit-text-stroke:0.45px #111318;letter-spacing:0.016em;">65% Complete</div><svg class="a" style="left:861.3px;top:388.0px;" width="15" height="15" viewBox="0 0 15 15" fill="none"><path d="M6.5 2.8 H3.8 a1.8 1.8 0 0 0 -1.8 1.8 V11.2 a1.8 1.8 0 0 0 1.8 1.8 H10.4 a1.8 1.8 0 0 0 1.8 -1.8 V8.5" stroke="#59606d" stroke-width="1.3" stroke-linecap="round"/><path d="M7.2 7.8 L13.2 1.8 M9.4 1.6 H13.4 V5.6" stroke="#59606d" stroke-width="1.3" stroke-linecap="round" stroke-linejoin="round"/></svg><div class="a" style="left:710.0px;top:409.7px;width:166.5px;height:5.5px;border-radius:3px;background:#e5e8ee"></div><div class="a" style="left:710.0px;top:409.7px;width:132.4px;height:5.5px;border-radius:3px;background:linear-gradient(90deg,#4aa0ea,#5aaaf0)"></div><div class="a" style="left:697.0px;top:426.3px;width:191.0px;height:176.2px;border-radius:8px;background:#fff;border:1px solid #e2e5ea;border-left:3.5px solid #4cb87a;box-shadow:0 1px 3px rgba(20,30,60,0.08)"></div><div class="t" style="left:708.6px;top:437.7px;font-size:13.4px;color:#0f1115;-webkit-text-stroke:0.45px #0f1115;letter-spacing:0.016em;">Design &amp; Intendines</div><div class="t" style="left:708.6px;top:457.1px;font-size:11.7px;color:#616876;letter-spacing:0.008em;">Sonware our cttections and</div><div class="t" style="left:708.6px;top:471.3px;font-size:11.7px;color:#616876;letter-spacing:0.008em;">sodines to renease tl: your</div><div class="t" style="left:708.6px;top:485.1px;font-size:11.7px;color:#616876;letter-spacing:0.008em;">demo.</div><div class="a" style="left:710.0px;top:505.4px;width:50.6px;height:19.5px;border-radius:10px;background:#d3e4fa"></div><div class="t" style="left:535.3px;width:400px;text-align:center;top:509.8px;font-size:11.7px;color:#1f2937;letter-spacing:0.008em;">Design</div><div class="a av" style="left:710.0px;top:534.5px;width:21.0px;height:21.0px;background:#f0c24e;"><i style="left:4.2px;top:2.9px;width:12.6px;height:19.3px;background:#46311f;border-radius:50% 50% 22% 22%"></i><i style="left:1.7px;top:17.6px;width:17.6px;height:8.4px;background:#3b3b3b;border-radius:50% 50% 0 0"></i><i style="left:8.2px;top:13.0px;width:4.6px;height:5.5px;background:#efc6ab;border-radius:30%"></i><i style="left:6.5px;top:5.0px;width:8.0px;height:10.5px;background:#efc6ab;border-radius:50%"></i></div><div class="t" style="left:734.9px;top:539.0px;font-size:11.9px;color:#111318;-webkit-text-stroke:0.45px #111318;letter-spacing:0.016em;-webkit-text-stroke-width:0.3px">Sarah C.</div><div class="a av" style="left:829.0px;top:536.0px;width:18.0px;height:18.0px;background:#c9d3d8;box-shadow:0 0 0 1.5px #fff;"><i style="left:1.8px;top:13.7px;width:14.4px;height:9.0px;background:#4a5a6a;border-radius:50% 50% 0 0"></i><i style="left:7.2px;top:11.2px;width:3.6px;height:3.6px;background:#d9b097"></i><i style="left:5.4px;top:4.0px;width:7.2px;height:9.0px;background:#d9b097;border-radius:50%"></i><i style="left:5.2px;top:2.7px;width:7.6px;height:3.6px;background:#6a6a6a;border-radius:50% 50% 20% 20%"></i></div><div class="a av" style="left:844.0px;top:536.0px;width:18.0px;height:18.0px;background:#d9cfc8;box-shadow:0 0 0 1.5px #fff;"><i style="left:3.6px;top:2.5px;width:10.8px;height:16.6px;background:#5a3a2a;border-radius:50% 50% 22% 22%"></i><i style="left:1.4px;top:15.1px;width:15.1px;height:7.2px;background:#8a7a74;border-radius:50% 50% 0 0"></i><i style="left:7.0px;top:11.2px;width:4.0px;height:4.7px;background:#dcae95;border-radius:30%"></i><i style="left:5.6px;top:4.3px;width:6.8px;height:9.0px;background:#dcae95;border-radius:50%"></i></div><div class="a av" style="left:859.0px;top:536.0px;width:18.0px;height:18.0px;background:#e0424a;box-shadow:0 0 0 1.5px #fff;"><i style="left:6.5px;top:6.5px;width:5px;height:5px;background:#fff;border-radius:50%"></i></div><div class="a" style="left:710.0px;top:567.0px;width:166.5px;height:1.0px;background:#e4e7ec"></div><svg class="a" style="left:709.7px;top:576.4px;" width="15" height="15" viewBox="0 0 15 15" fill="none"><path d="M7.5 1.5 C11 1.5 13.6 4 13.6 7 C13.6 10 11 12.4 7.5 12.4 C6.6 12.4 5.7 12.2 4.9 11.9 L1.8 13.4 L2.6 10.6 C1.9 9.6 1.5 8.4 1.5 7 C1.5 4 4 1.5 7.5 1.5 Z" stroke="#59606d" stroke-width="1.3" stroke-linejoin="round"/></svg><svg class="a" style="left:734px;top:577.6px;" width="16" height="15" viewBox="0 0 16 15" fill="none"><rect x="1.2" y="1.2" width="8" height="8.2" rx="3.3" stroke="#59606d" stroke-width="1.3"/><path d="M5.5 5.3 H12.7 C13.5 5.3 14 5.8 14 6.6 V8.3 C14 10.8 12 12.6 9.2 12.6 C6.4 12.6 4.3 10.8 4.3 8.3 V6.6 C4.3 5.8 4.8 5.3 5.5 5.3 Z" fill="#fff" stroke="#59606d" stroke-width="1.3"/><path d="M5.8 8.5 H10.3" stroke="#59606d" stroke-width="1.2" stroke-linecap="round"/></svg><svg class="a" style="left:861.3px;top:576.3000000000001px;" width="15" height="15" viewBox="0 0 15 15" fill="none"><path d="M6.5 2.8 H3.8 a1.8 1.8 0 0 0 -1.8 1.8 V11.2 a1.8 1.8 0 0 0 1.8 1.8 H10.4 a1.8 1.8 0 0 0 1.8 -1.8 V8.5" stroke="#59606d" stroke-width="1.3" stroke-linecap="round"/><path d="M7.2 7.8 L13.2 1.8 M9.4 1.6 H13.4 V5.6" stroke="#59606d" stroke-width="1.3" stroke-linecap="round" stroke-linejoin="round"/></svg><div class="a" style="left:697.0px;top:609.6px;width:191.0px;height:115.9px;border-radius:8px;background:#fff;border:1px solid #e2e5ea;border-left:3.5px solid #4a8ae0;box-shadow:0 1px 3px rgba(20,30,60,0.08)"></div><div class="t" style="left:708.6px;top:619.8px;font-size:13.4px;color:#0f1115;-webkit-text-stroke:0.45px #0f1115;letter-spacing:0.016em;">Finalize Brand Guidelines</div><div class="t" style="left:708.6px;top:641.1px;font-size:11.7px;color:#616876;letter-spacing:0.008em;">Finalize Brand Guidelines to</div><div class="t" style="left:708.6px;top:655.1px;font-size:11.7px;color:#616876;letter-spacing:0.008em;">intarize their complestions.</div><div class="t" style="left:708.6px;top:673.6px;font-size:11.5px;color:#616876;letter-spacing:0.008em;">Due Oct 28</div><div class="a av" style="left:710.0px;top:696.2px;width:21.0px;height:21.0px;background:#f0c24e;"><i style="left:4.2px;top:2.9px;width:12.6px;height:19.3px;background:#46311f;border-radius:50% 50% 22% 22%"></i><i style="left:1.7px;top:17.6px;width:17.6px;height:8.4px;background:#3b3b3b;border-radius:50% 50% 0 0"></i><i style="left:8.2px;top:13.0px;width:4.6px;height:5.5px;background:#efc6ab;border-radius:30%"></i><i style="left:6.5px;top:5.0px;width:8.0px;height:10.5px;background:#efc6ab;border-radius:50%"></i></div><div class="t" style="left:734.9px;top:700.7px;font-size:11.9px;color:#111318;-webkit-text-stroke:0.45px #111318;letter-spacing:0.016em;-webkit-text-stroke-width:0.3px">Sarah C.</div><div class="a av" style="left:844.0px;top:697.7px;width:18.0px;height:18.0px;background:#d7d2cc;box-shadow:0 0 0 1.5px #fff;"><i style="left:1.8px;top:13.7px;width:14.4px;height:9.0px;background:#c9b8a8;border-radius:50% 50% 0 0"></i><i style="left:7.2px;top:11.2px;width:3.6px;height:3.6px;background:#e0b89c"></i><i style="left:5.4px;top:4.0px;width:7.2px;height:9.0px;background:#e0b89c;border-radius:50%"></i><i style="left:5.2px;top:2.7px;width:7.6px;height:3.6px;background:#8a6a4a;border-radius:50% 50% 20% 20%"></i></div><div class="a av" style="left:859.0px;top:697.7px;width:18.0px;height:18.0px;background:#3aae5c;box-shadow:0 0 0 1.5px #fff;"><i style="left:6.5px;top:6.5px;width:5px;height:5px;background:#fff;border-radius:50%"></i></div><div class="a" style="left:909.8px;top:241.3px;width:191.7px;height:156.5px;border-radius:8px;background:#fff;border:1px solid #e2e5ea;border-left:3.5px solid #a45ec8;box-shadow:0 1px 3px rgba(20,30,60,0.08)"></div><div class="t" style="left:921.4px;top:253.4px;font-size:13.4px;color:#0f1115;-webkit-text-stroke:0.45px #0f1115;letter-spacing:0.016em;">Finalize Brand Guidelines</div><div class="t" style="left:921.4px;top:273.5px;font-size:11.7px;color:#616876;letter-spacing:0.008em;">Finalize Brand Guidelines for</div><div class="t" style="left:921.4px;top:286.8px;font-size:11.7px;color:#616876;letter-spacing:0.008em;">and thomatical comments.</div><div class="a" style="left:922.8px;top:310.6px;width:83.0px;height:19.5px;border-radius:10px;background:linear-gradient(90deg,#c8efc9 0%,#c8efc9 48%,#ecd2f6 48%,#ecd2f6 100%)"></div><div class="t" style="left:764.3px;width:400px;text-align:center;top:315.0px;font-size:11.7px;color:#1f2937;letter-spacing:0.008em;">Green/Purple</div><div class="a" style="left:1011.3px;top:310.6px;width:48.0px;height:19.5px;border-radius:10px;background:#fbe9a4"></div><div class="t" style="left:835.3px;width:400px;text-align:center;top:315.0px;font-size:11.7px;color:#1f2937;letter-spacing:0.008em;">Yellow</div><div class="a av" style="left:922.8px;top:340.9px;width:21.0px;height:21.0px;background:#8fc3c0;"><i style="left:2.1px;top:16.0px;width:16.8px;height:10.5px;background:#2b2f36;border-radius:50% 50% 0 0"></i><i style="left:8.4px;top:13.0px;width:4.2px;height:4.2px;background:#d4a184"></i><i style="left:6.3px;top:4.6px;width:8.4px;height:10.5px;background:#d4a184;border-radius:50%"></i><i style="left:6.1px;top:3.1px;width:8.8px;height:4.2px;background:#231a14;border-radius:50% 50% 20% 20%"></i></div><div class="t" style="left:947.7px;top:345.4px;font-size:11.9px;color:#111318;-webkit-text-stroke:0.45px #111318;letter-spacing:0.016em;-webkit-text-stroke-width:0.3px">Alex T.</div><div class="a av" style="left:1027.5px;top:342.4px;width:18.0px;height:18.0px;background:#d7d2cc;box-shadow:0 0 0 1.5px #fff;"><i style="left:1.8px;top:13.7px;width:14.4px;height:9.0px;background:#c9b8a8;border-radius:50% 50% 0 0"></i><i style="left:7.2px;top:11.2px;width:3.6px;height:3.6px;background:#e0b89c"></i><i style="left:5.4px;top:4.0px;width:7.2px;height:9.0px;background:#e0b89c;border-radius:50%"></i><i style="left:5.2px;top:2.7px;width:7.6px;height:3.6px;background:#8a6a4a;border-radius:50% 50% 20% 20%"></i></div><div class="a av" style="left:1042.5px;top:342.4px;width:18.0px;height:18.0px;background:#c9d3d8;box-shadow:0 0 0 1.5px #fff;"><i style="left:1.8px;top:13.7px;width:14.4px;height:9.0px;background:#4a5a6a;border-radius:50% 50% 0 0"></i><i style="left:7.2px;top:11.2px;width:3.6px;height:3.6px;background:#d9b097"></i><i style="left:5.4px;top:4.0px;width:7.2px;height:9.0px;background:#d9b097;border-radius:50%"></i><i style="left:5.2px;top:2.7px;width:7.6px;height:3.6px;background:#6a6a6a;border-radius:50% 50% 20% 20%"></i></div><div class="a av" style="left:1057.5px;top:342.4px;width:18.0px;height:18.0px;background:#d9cfc8;box-shadow:0 0 0 1.5px #fff;"><i style="left:3.6px;top:2.5px;width:10.8px;height:16.6px;background:#5a3a2a;border-radius:50% 50% 22% 22%"></i><i style="left:1.4px;top:15.1px;width:15.1px;height:7.2px;background:#8a7a74;border-radius:50% 50% 0 0"></i><i style="left:7.0px;top:11.2px;width:4.0px;height:4.7px;background:#dcae95;border-radius:30%"></i><i style="left:5.6px;top:4.3px;width:6.8px;height:9.0px;background:#dcae95;border-radius:50%"></i></div><div class="a av" style="left:1072.5px;top:342.4px;width:18.0px;height:18.0px;background:#3aae5c;box-shadow:0 0 0 1.5px #fff;"><i style="left:6.5px;top:6.5px;width:5px;height:5px;background:#fff;border-radius:50%"></i></div><svg class="a" style="left:922.5px;top:373.3px;" width="15" height="15" viewBox="0 0 15 15" fill="none"><path d="M7.5 1.5 C11 1.5 13.6 4 13.6 7 C13.6 10 11 12.4 7.5 12.4 C6.6 12.4 5.7 12.2 4.9 11.9 L1.8 13.4 L2.6 10.6 C1.9 9.6 1.5 8.4 1.5 7 C1.5 4 4 1.5 7.5 1.5 Z" stroke="#59606d" stroke-width="1.3" stroke-linejoin="round"/></svg><svg class="a" style="left:946.8px;top:374.5px;" width="16" height="15" viewBox="0 0 16 15" fill="none"><rect x="1.2" y="1.2" width="8" height="8.2" rx="3.3" stroke="#59606d" stroke-width="1.3"/><path d="M5.5 5.3 H12.7 C13.5 5.3 14 5.8 14 6.6 V8.3 C14 10.8 12 12.6 9.2 12.6 C6.4 12.6 4.3 10.8 4.3 8.3 V6.6 C4.3 5.8 4.8 5.3 5.5 5.3 Z" fill="#fff" stroke="#59606d" stroke-width="1.3"/><path d="M5.8 8.5 H10.3" stroke="#59606d" stroke-width="1.2" stroke-linecap="round"/></svg><div class="a" style="left:909.8px;top:405.8px;width:191.7px;height:160.7px;border-radius:8px;background:#fff;border:1px solid #e2e5ea;border-left:3.5px solid #a45ec8;box-shadow:0 1px 3px rgba(20,30,60,0.08)"></div><div class="t" style="left:921.4px;top:416.9px;font-size:13.4px;color:#0f1115;-webkit-text-stroke:0.45px #0f1115;letter-spacing:0.016em;">Finalize Brand Demo</div><div class="t" style="left:921.4px;top:437.6px;font-size:11.7px;color:#616876;letter-spacing:0.008em;">Finalize Brand Guidelines for</div><div class="t" style="left:921.4px;top:450.6px;font-size:11.7px;color:#616876;letter-spacing:0.008em;">andln information.</div><div class="a" style="left:922.8px;top:470.9px;width:83.0px;height:19.7px;border-radius:10px;background:linear-gradient(90deg,#c8efc9 0%,#c8efc9 48%,#ecd2f6 48%,#ecd2f6 100%)"></div><div class="t" style="left:764.3px;width:400px;text-align:center;top:475.4px;font-size:11.7px;color:#1f2937;letter-spacing:0.008em;">Green/Purple</div><div class="a" style="left:1011.3px;top:470.9px;width:48.0px;height:19.5px;border-radius:10px;background:#fbe9a4"></div><div class="t" style="left:835.3px;width:400px;text-align:center;top:475.3px;font-size:11.7px;color:#1f2937;letter-spacing:0.008em;">Yellow</div><div class="a av" style="left:922.8px;top:500.9px;width:21.0px;height:21.0px;background:#8fc3c0;"><i style="left:2.1px;top:16.0px;width:16.8px;height:10.5px;background:#2b2f36;border-radius:50% 50% 0 0"></i><i style="left:8.4px;top:13.0px;width:4.2px;height:4.2px;background:#d4a184"></i><i style="left:6.3px;top:4.6px;width:8.4px;height:10.5px;background:#d4a184;border-radius:50%"></i><i style="left:6.1px;top:3.1px;width:8.8px;height:4.2px;background:#231a14;border-radius:50% 50% 20% 20%"></i></div><div class="t" style="left:947.7px;top:505.4px;font-size:11.9px;color:#111318;-webkit-text-stroke:0.45px #111318;letter-spacing:0.016em;-webkit-text-stroke-width:0.3px">Alex T.</div><div class="a av" style="left:1027.5px;top:502.4px;width:18.0px;height:18.0px;background:#d7d2cc;box-shadow:0 0 0 1.5px #fff;"><i style="left:1.8px;top:13.7px;width:14.4px;height:9.0px;background:#c9b8a8;border-radius:50% 50% 0 0"></i><i style="left:7.2px;top:11.2px;width:3.6px;height:3.6px;background:#e0b89c"></i><i style="left:5.4px;top:4.0px;width:7.2px;height:9.0px;background:#e0b89c;border-radius:50%"></i><i style="left:5.2px;top:2.7px;width:7.6px;height:3.6px;background:#8a6a4a;border-radius:50% 50% 20% 20%"></i></div><div class="a av" style="left:1042.5px;top:502.4px;width:18.0px;height:18.0px;background:#c9d3d8;box-shadow:0 0 0 1.5px #fff;"><i style="left:1.8px;top:13.7px;width:14.4px;height:9.0px;background:#4a5a6a;border-radius:50% 50% 0 0"></i><i style="left:7.2px;top:11.2px;width:3.6px;height:3.6px;background:#d9b097"></i><i style="left:5.4px;top:4.0px;width:7.2px;height:9.0px;background:#d9b097;border-radius:50%"></i><i style="left:5.2px;top:2.7px;width:7.6px;height:3.6px;background:#6a6a6a;border-radius:50% 50% 20% 20%"></i></div><div class="a av" style="left:1057.5px;top:502.4px;width:18.0px;height:18.0px;background:#d9cfc8;box-shadow:0 0 0 1.5px #fff;"><i style="left:3.6px;top:2.5px;width:10.8px;height:16.6px;background:#5a3a2a;border-radius:50% 50% 22% 22%"></i><i style="left:1.4px;top:15.1px;width:15.1px;height:7.2px;background:#8a7a74;border-radius:50% 50% 0 0"></i><i style="left:7.0px;top:11.2px;width:4.0px;height:4.7px;background:#dcae95;border-radius:30%"></i><i style="left:5.6px;top:4.3px;width:6.8px;height:9.0px;background:#dcae95;border-radius:50%"></i></div><div class="a av" style="left:1072.5px;top:502.4px;width:18.0px;height:18.0px;background:#3aae5c;box-shadow:0 0 0 1.5px #fff;"><i style="left:6.5px;top:6.5px;width:5px;height:5px;background:#fff;border-radius:50%"></i></div><div class="a" style="left:922.8px;top:531.0px;width:166.7px;height:1.0px;background:#e4e7ec"></div><svg class="a" style="left:922.5px;top:539.8px;" width="15" height="15" viewBox="0 0 15 15" fill="none"><path d="M7.5 1.5 C11 1.5 13.6 4 13.6 7 C13.6 10 11 12.4 7.5 12.4 C6.6 12.4 5.7 12.2 4.9 11.9 L1.8 13.4 L2.6 10.6 C1.9 9.6 1.5 8.4 1.5 7 C1.5 4 4 1.5 7.5 1.5 Z" stroke="#59606d" stroke-width="1.3" stroke-linejoin="round"/></svg><svg class="a" style="left:946.8px;top:541px;" width="16" height="15" viewBox="0 0 16 15" fill="none"><rect x="1.2" y="1.2" width="8" height="8.2" rx="3.3" stroke="#59606d" stroke-width="1.3"/><path d="M5.5 5.3 H12.7 C13.5 5.3 14 5.8 14 6.6 V8.3 C14 10.8 12 12.6 9.2 12.6 C6.4 12.6 4.3 10.8 4.3 8.3 V6.6 C4.3 5.8 4.8 5.3 5.5 5.3 Z" fill="#fff" stroke="#59606d" stroke-width="1.3"/><path d="M5.8 8.5 H10.3" stroke="#59606d" stroke-width="1.2" stroke-linecap="round"/></svg><svg class="a" style="left:1075.3px;top:539.7px;" width="15" height="15" viewBox="0 0 15 15" fill="none"><path d="M6.5 2.8 H3.8 a1.8 1.8 0 0 0 -1.8 1.8 V11.2 a1.8 1.8 0 0 0 1.8 1.8 H10.4 a1.8 1.8 0 0 0 1.8 -1.8 V8.5" stroke="#59606d" stroke-width="1.3" stroke-linecap="round"/><path d="M7.2 7.8 L13.2 1.8 M9.4 1.6 H13.4 V5.6" stroke="#59606d" stroke-width="1.3" stroke-linecap="round" stroke-linejoin="round"/></svg><div class="a" style="left:1130.0px;top:140.0px;width:203.5px;height:140.6px;border-radius:10px;background:#fff;border:1px solid #e3e5ea"></div><div class="t" style="left:1142.9px;top:153.0px;font-size:15.9px;color:#0f1115;-webkit-text-stroke:0.45px #0f1115;letter-spacing:0.016em;">Project Health</div><svg class="a" style="left:1160px;top:170px;" width="145" height="80" viewBox="0 0 145 80" fill="none"><defs><linearGradient id="gg" x1="0" y1="0.6" x2="1" y2="0.2"><stop offset="0" stop-color="#25ad8c"/><stop offset="0.5" stop-color="#56c784"/><stop offset="1" stop-color="#92e37c"/></linearGradient></defs>
<path d="M112.05 43.61 A49.5 49.5 0 0 1 121.00 72.00" stroke="#e5e7ec" stroke-width="21"/>
<path d="M22.00 72.00 A49.5 49.5 0 0 1 112.05 43.61" stroke="url(#gg)" stroke-width="21"/>
<path d="M68.59999999999991 65.19999999999999 L103.79999999999995 33.80000000000001 L75.20000000000005 71.6 Z" fill="#3b4656" stroke="#3b4656" stroke-width="1" stroke-linejoin="round"/>
<circle cx="71.79999999999995" cy="68.4" r="4.6" fill="#3b4656"/></svg><div class="t" style="left:1192.3px;top:252.8px;font-size:13.2px;color:#16181d;letter-spacing:0.008em;">82% <span style="color:#3a9a4a">Healthy</span></div><div class="a" style="left:1130.0px;top:291.7px;width:203.5px;height:144.3px;border-radius:10px;background:#fff;border:1px solid #e3e5ea"></div><div class="t" style="left:1143.0px;top:304.5px;font-size:15.9px;color:#0f1115;-webkit-text-stroke:0.45px #0f1115;letter-spacing:0.016em;">Task Completion</div><svg class="a" style="left:1140px;top:330px;" width="96" height="96" viewBox="0 0 96 96" fill="none"><defs><linearGradient id="dg" x1="0" y1="0" x2="0" y2="1"><stop offset="0" stop-color="#8fe07c"/><stop offset="1" stop-color="#2fb08c"/></linearGradient><linearGradient id="db" x1="0" y1="0" x2="0" y2="1"><stop offset="0" stop-color="#4a72e2"/><stop offset="1" stop-color="#4d62e6"/></linearGradient></defs><path d="M48.00 14.25 A33.75 33.75 0 0 1 48.00 81.75" stroke="url(#dg)" stroke-width="22.5"/><path d="M48.00 81.75 A33.75 33.75 0 0 1 15.90 37.57" stroke="url(#db)" stroke-width="22.5"/><path d="M15.90 37.57 A33.75 33.75 0 0 1 48.00 14.25" stroke="#a3abbb" stroke-width="22.5"/><path d="M48.00 26.50 L48.00 2.00" stroke="#fff" stroke-width="1"/><path d="M48.00 69.50 L48.00 94.00" stroke="#fff" stroke-width="1"/><path d="M27.55 41.36 L4.25 33.79" stroke="#fff" stroke-width="1"/></svg><div class="a" style="left:1250.5px;top:340.3px;width:9.0px;height:9.0px;border-radius:50%;background:#4cc47a"></div><div class="t" style="left:1264.4px;top:332.5px;font-size:11px;color:#1f2328;letter-spacing:0.008em;">Done</div><div class="t" style="left:1264.4px;top:344.6px;font-size:11.5px;color:#111318;-webkit-text-stroke:0.45px #111318;letter-spacing:0.016em;">50%</div><div class="a" style="left:1250.5px;top:373.5px;width:9.0px;height:9.0px;border-radius:50%;background:#4a6ee6"></div><div class="t" style="left:1264.4px;top:365.7px;font-size:11px;color:#1f2328;letter-spacing:0.008em;">In Progress</div><div class="t" style="left:1264.4px;top:377.8px;font-size:11.5px;color:#111318;-webkit-text-stroke:0.45px #111318;letter-spacing:0.016em;">30%</div><div class="a" style="left:1250.5px;top:407.0px;width:9.0px;height:9.0px;border-radius:50%;background:#a9b0bd"></div><div class="t" style="left:1264.4px;top:399.2px;font-size:11px;color:#1f2328;letter-spacing:0.008em;">To Do</div><div class="t" style="left:1264.4px;top:411.3px;font-size:11.5px;color:#111318;-webkit-text-stroke:0.45px #111318;letter-spacing:0.016em;">20%</div><div class="a" style="left:1130.0px;top:448.9px;width:203.5px;height:152.8px;border-radius:10px;background:#fff;border:1px solid #e3e5ea"></div><div class="t" style="left:1143.3px;top:461.5px;font-size:15.9px;color:#0f1115;-webkit-text-stroke:0.45px #0f1115;letter-spacing:0.016em;">Team Velocity</div><div class="a" style="left:1167.5px;top:493.4px;width:151.0px;height:1.0px;background:#e6e8ee"></div><div class="t" style="right:214.5px;top:488.9px;font-size:11px;color:#2b2f36;letter-spacing:0.008em;">100</div><div class="a" style="left:1167.5px;top:512.6px;width:151.0px;height:1.0px;background:#e6e8ee"></div><div class="t" style="right:214.5px;top:508.1px;font-size:11px;color:#2b2f36;letter-spacing:0.008em;">75</div><div class="a" style="left:1167.5px;top:532.0px;width:151.0px;height:1.0px;background:#e6e8ee"></div><div class="t" style="right:214.5px;top:527.5px;font-size:11px;color:#2b2f36;letter-spacing:0.008em;">50</div><div class="a" style="left:1167.5px;top:551.5px;width:151.0px;height:1.0px;background:#e6e8ee"></div><div class="t" style="right:214.5px;top:547.0px;font-size:11px;color:#2b2f36;letter-spacing:0.008em;">25</div><div class="a" style="left:1167.5px;top:570.7px;width:151.0px;height:1.0px;background:#e6e8ee"></div><div class="t" style="right:214.5px;top:566.2px;font-size:11px;color:#2b2f36;letter-spacing:0.008em;">0</div><div class="a" style="left:1179.8px;top:520.0px;width:26.7px;height:51.0px;border-radius:2px 2px 0 0;background:#cdd2dc"></div><div class="a" style="left:1179.8px;top:535.0px;width:26.7px;height:36.0px;background:linear-gradient(180deg,#3a94ec,#5a5ee6);box-shadow:0 -1px 0 #bfe0fa"></div><div class="a" style="left:1229.5px;top:503.3px;width:26.7px;height:67.7px;border-radius:2px 2px 0 0;background:#cdd2dc"></div><div class="a" style="left:1229.5px;top:519.2px;width:26.7px;height:51.8px;background:linear-gradient(180deg,#3a94ec,#5a5ee6);box-shadow:0 -1px 0 #bfe0fa"></div><div class="a" style="left:1279.2px;top:501.0px;width:26.7px;height:70.0px;border-radius:2px 2px 0 0;background:#cdd2dc"></div><div class="a" style="left:1279.2px;top:525.0px;width:26.7px;height:46.0px;background:linear-gradient(180deg,#3a94ec,#5a5ee6);box-shadow:0 -1px 0 #bfe0fa"></div><div class="t" style="left:993.2px;width:400px;text-align:center;top:577.1px;font-size:11px;color:#2b2f36;letter-spacing:0.008em;">Oct 1-7</div><div class="t" style="left:1043.1px;width:400px;text-align:center;top:577.1px;font-size:11px;color:#2b2f36;letter-spacing:0.008em;">8-14</div><div class="t" style="left:1092.8px;width:400px;text-align:center;top:577.1px;font-size:11px;color:#2b2f36;letter-spacing:0.008em;">15-21</div><div class="a" style="left:1130.0px;top:613.5px;width:203.5px;height:112.1px;border-radius:10px;background:#fff;border:1px solid #e3e5ea"></div><div class="t" style="left:1143.0px;top:626.3px;font-size:15.7px;color:#0f1115;-webkit-text-stroke:0.45px #0f1115;letter-spacing:0.016em;">Upcoming Deadlines</div><div class="t" style="left:1142.6px;top:660.0px;font-size:14px;color:#16181d;letter-spacing:0.008em;">Client Demo</div><div class="t" style="right:56.5px;top:660.0px;font-size:14px;color:#16181d;letter-spacing:0.008em;">Oct 28</div><div class="a" style="left:1144.0px;top:684.4px;width:175.5px;height:1.0px;background:#e4e7ec"></div><div class="t" style="left:1142.6px;top:694.8px;font-size:14.1px;color:#16181d;letter-spacing:0.008em;">Marketing Launch</div><div class="t" style="right:56.5px;top:694.8px;font-size:14px;color:#16181d;letter-spacing:0.008em;">Nov 1</div></body></html>
